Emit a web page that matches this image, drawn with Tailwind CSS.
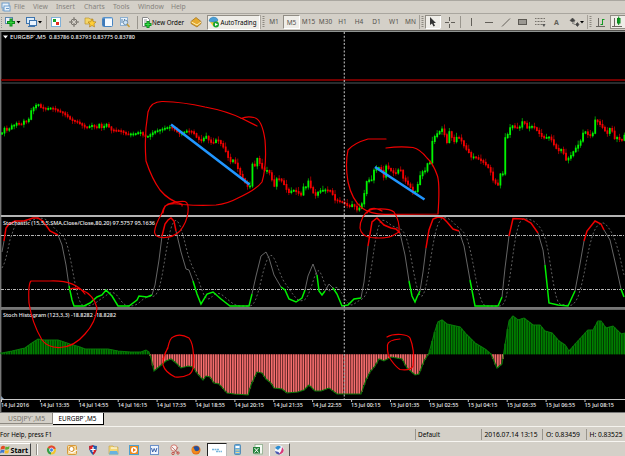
<!DOCTYPE html>
<html lang="en">
<head>
    <meta charset="UTF-8">
    <meta name="viewport" content="width=device-width, initial-scale=1.0">
    <title>EURGBP`,M5</title>
    <script src="https://cdn.jsdelivr.net/npm/@tailwindcss/browser@4"></script>
</head>
<body class="bg-[#d4d0c8] overflow-hidden">
<div class="w-[625px] h-[456px] flex flex-col bg-[#d4d0c8] font-['Noto_Sans',sans-serif] text-[7px] leading-none text-black overflow-hidden whitespace-nowrap">

    <!-- Menu -->
    <div class="h-[13px] shrink-0 flex items-center border-t border-[#aaa7a0] text-[6.8px] text-[#85827c]">
        <svg class="w-[10px] h-[10px] ml-px mr-[3px] shrink-0" viewBox="0 0 10 10"><rect x="1" y="1" width="7" height="5" fill="#e8f2fb" stroke="#6c9ccb"/><rect x="3" y="4" width="6" height="5" fill="#e8f2fb" stroke="#6c9ccb"/><path d="M1 8h2M5 6.500h3" stroke="#6c9ccb"/></svg>
        <span class="w-[19px]">File</span>
        <span class="w-[23px]">View</span>
        <span class="w-7">Insert</span>
        <span class="w-[29px]">Charts</span>
        <span class="w-[25px]">Tools</span>
        <span class="w-[33px]">Window</span>
        <span>Help</span>
    </div>

    <!-- Toolbar -->
    <div class="h-[17px] shrink-0 flex items-center border-t border-[#a9a69f] text-[#55524d]">
        <svg class="w-[46px] h-4 shrink-0" viewBox="0 14 46 16">
            <path d="M1.500 17v11" stroke="#999" stroke-dasharray="1 1"/>
            <rect x="5.500" y="17.500" width="7" height="6" fill="#eef" stroke="#5a86ae"/><path d="M11 18.500v8M7 22.500h8" stroke="#0a8a18" stroke-width="3"/><path d="M11 19.500v6M8 22.500h6" stroke="#36d43c"/>
            <path d="M16.500 21h4l-2 2.500zM38 21h4l-2 2.500z" fill="#000"/>
            <rect x="26.500" y="17.500" width="8" height="6" fill="#dcecfa" stroke="#3d74ad"/><rect x="29.500" y="20.500" width="7" height="5" fill="#eaf4ff" stroke="#3d74ad"/><path d="M28 26.500h7" stroke="#3d74ad"/>
        </svg>
        <svg class="w-[92px] h-4 shrink-0" viewBox="46 14 92 16">
            <path d="M46.500 16v13M137.500 16v13" stroke="#99958d"/>
            <rect x="51.500" y="17.500" width="9" height="9" fill="#fff" stroke="#7fb0d8"/><rect x="53" y="19" width="3" height="3" fill="#19a12a"/><rect x="56" y="22" width="3" height="3" fill="#e32b1c"/>
            <circle cx="74" cy="22" r="3" fill="none" stroke="#77736c"/><path d="M74 17v4M74 23v4M69 22h4M75 22h4" stroke="#77736c"/>
            <path d="M85 18h4l1 1h3v5h-8z" fill="#f4d568" stroke="#b28a22" stroke-width=".6"/><path d="M92 19l1.200 2.600 2.800.3-2 2 .5 3-2.500-1.400L89.500 27l.5-3-2-2 2.800-.3z" fill="#ffcf37" stroke="#aa7512" stroke-width=".6"/>
            <rect x="102.500" y="17.500" width="10" height="9" rx="1" fill="#f5faff" stroke="#4784c1"/><path d="M104 18v8" stroke="#3e79b8" stroke-width="2"/><path d="M103 18h9" stroke="#6da3d6"/>
            <rect x="120.500" y="17.500" width="7" height="8" fill="#e5f0fa" stroke="#8db0d0"/><path d="M122 19v4M124.500 19v3" stroke="#5b86b0"/><circle cx="125.500" cy="22.500" r="2.200" fill="#cce5f9" stroke="#728fa9"/><path d="M127 24l2.500 3" stroke="#c79c36" stroke-width="1.400"/>
        </svg>
        <div class="w-[49px] ml-[3px] flex items-center text-black shrink-0">
            <svg class="w-[11px] h-[13px] shrink-0" viewBox="0 0 11 13"><path d="M1.500 1.500h5l2 2v7h-7z" fill="#fff" stroke="#888"/><path d="M3 4h3M3 6h3" stroke="#999"/><path d="M7 5v7M3.500 8.500h7" stroke="#0c9321" stroke-width="3"/><path d="M7 6v5M4.500 8.500h5" stroke="#3bdf46"/></svg>
            <svg class="w-[33px] h-3 overflow-visible" viewBox="0 0 33 12"><text x="0" y="8.500" font-size="7.300" textLength="32" lengthAdjust="spacingAndGlyphs">New Order</text></svg>
        </div>
        <svg class="w-[17px] h-[13px] shrink-0" viewBox="0 0 17 13"><path d="M1 5.500L6 1.500l5 4v2l-4 3.500-6-3.500z" fill="#e5a92d" stroke="#9b6a13" stroke-width=".7"/><path d="M1.500 6l5.500 3L11 6" stroke="#fff0b0" fill="none"/></svg>
        <div class="w-[53px] h-[15px] flex items-center bg-[#efede8] border border-[#918d85] border-b-white border-r-white text-black shrink-0">
            <svg class="w-[12px] h-3 shrink-0" viewBox="0 0 12 12"><path d="M2 6l3 4 4-1 1-4z" fill="#f1cb38"/><path d="M1 5q0-3 4-4 4 0 5 3 0 2-5 2-3 0-4-1z" fill="#4b9ed4" stroke="#277bb2" stroke-width=".5"/><circle cx="8" cy="8.500" r="3" fill="#19a52d"/><path d="M7 7l3 1.500L7 10z" fill="#fff"/></svg>
            <svg class="w-[38px] h-3 shrink-0 overflow-visible" viewBox="0 0 38 12"><text x="0.500" y="8.500" font-size="7.300" textLength="36" lengthAdjust="spacingAndGlyphs">AutoTrading</text></svg>
        </div>
        <svg class="w-[9px] h-4 shrink-0" viewBox="0 0 9 16"><path d="M3.500 2v12" stroke="#8d8981" stroke-width="2" stroke-dasharray="1 1"/><path d="M.5 1v14" stroke="#aaa69e"/></svg>
        <div class="flex items-center text-center text-[6.500px] shrink-0">
            <span class="w-[10px]">M1</span>
            <span class="w-[17px] h-[14px] ml-[4px] leading-[13px] bg-[#efede8] border border-[#918d85] border-r-white border-b-white">M5</span>
            <span class="w-[17px]">M15</span>
            <span class="w-[17px]">M30</span>
            <span class="w-[17px]">H1</span>
            <span class="w-4">H4</span>
            <span class="w-[19px]">D1</span>
            <span class="w-4">W1</span>
            <span class="w-[17px]">MN</span>
        </div>
        <svg class="w-[206px] h-4 shrink-0" viewBox="419 14 206 16">
            <path d="M419.500 15v14M587.500 15v14" stroke="#a5a199"/><path d="M422.500 16v12M590.500 16v12" stroke="#8d8981" stroke-width="2" stroke-dasharray="1 1"/>
            <rect x="425.500" y="15.500" width="15" height="13" fill="#efede8" stroke="#918d85"/><path d="M440.500 16v12.500h-15" stroke="#fff" fill="none"/>
            <path d="M430 17v8l2-1.500 1.500 3 1.500-.8-1.400-2.700h2.400z" fill="#333"/>
            <path d="M449.500 17v4M449.500 24v4M445 22.500h4M451 22.500h4" stroke="#625f59"/>
            <path d="M460.500 16v12" stroke="#99958d"/>
            <path d="M471.500 18v8M485 22.500h8M502 26.500l8-8" stroke="#625f59"/>
            <rect x="518.500" y="19.500" width="8" height="5" fill="#9b9892" stroke="#5c5953"/>
            <path d="M535 18.500h10M535 21.500h10M535 24.500h7" stroke="#77736c" stroke-dasharray="1 .5"/><path d="M542 24h3.500l-1.500 3z" fill="#555"/>
            <text x="554" y="25" font-size="7" font-weight="bold" fill="#625f59" textLength="5">A</text>
            <path d="M570 20.500l2.500-2.500 2.500 2.500-2.500 1.500zM573.500 22.500l1.500-1M575.500 24.500l2-2 1.500 2-1.500 2zM572 23l3 1.500" fill="#444" stroke="#444" stroke-width=".6"/><path d="M580 21h4l-2 2.500z" fill="#000"/>
            <path d="M598.500 18v9M596 26.500h9" stroke="#696660"/><path d="M602.500 19v6M600.500 24.500h2M602.500 19.500h2" stroke="#139a25"/>
            <rect x="610.500" y="15.500" width="16" height="13" fill="#efede8" stroke="#918d85"/><path d="M614.500 18v9M612 26.500h10" stroke="#696660"/><rect x="617.500" y="18.500" width="2.500" height="4.500" fill="#21c831" stroke="#08871a"/><path d="M618.700 16.500v8.500" stroke="#08871a"/>
        </svg>
    </div>

    <!-- Chart window -->
    <svg class="w-[625px] h-[383px] shrink-0 block" viewBox="0 30 625 383" font-family="Noto Sans, sans-serif">
        <rect x="0" y="30" width="625" height="383" fill="#000"/>
        <path d="M0 30.500h625" stroke="#55534f"/>
        <path d="M0 31.500h625" stroke="#8f9391"/>
        <path d="M.7 32v380" stroke="#777" stroke-width="1.400"/>
        <path d="M1 80h624" stroke="#720000" stroke-width="1.800"/>
        <path d="M1 83h624" stroke="#353b3e" stroke-width="1.600"/>
        <g id="candles"></g>
        <g id="histogram"></g>
        <path d="M1 235.500h624M1 289.500h624" stroke="#b5b5b5" stroke-dasharray="3 1 1 1"/>
        <g id="stochastic" fill="none"></g>
        <path d="M1 216h624" stroke="#b4b4b4" stroke-width="2"/>
        <path d="M1 308h624" stroke="#777" stroke-width="2"/><path d="M1 309.500h624" stroke="#aaa" stroke-width=".6"/>
        <path d="M344.300 32v367" stroke="#aaa" stroke-width="1.200" stroke-dasharray="2 1.700"/>
        <path d="M1 399.500h624" stroke="#c8c8c8"/>
        <path d="M1 396v3h3z" fill="#8aa0b8"/>
        <g id="times" fill="#f0f0f0" font-size="5.800" font-weight="500"></g>

        <path d="M3 35.500h5l-2.500 3z" fill="#fff"/>
        <g fill="#f4f4f4" font-size="5.900" font-weight="500">
            <text x="10" y="39" textLength="36" lengthAdjust="spacingAndGlyphs">EURGBP`,M5</text>
            <text x="49" y="39" textLength="86" lengthAdjust="spacingAndGlyphs">0.83786 0.83793 0.83775 0.83780</text>
            <text x="3" y="224.500" textLength="152" lengthAdjust="spacingAndGlyphs">Stochastic (15,5,5,SMA,Close/Close,80,20) 97.5757 95.1636</text>
            <text x="3" y="316.500" textLength="113" lengthAdjust="spacingAndGlyphs">Stoch Histogram (123,3,3) -18.8282 -18.8282</text>
        </g>

        <!-- Divergence lines -->
        <path d="M171 124.500L249.500 184.500M375 167L424.500 199.500" stroke="#2196ff" stroke-width="2.600"/>

        <!-- Marker notes -->
        <g fill="none" stroke="#f00000" stroke-width="1.200" stroke-linecap="round">
            <path d="M257 126L243 119Q227 111 205 107Q183 102 163 101.500Q151 101 148 112Q144 135 146 161Q152 179 160 190Q169 201 183 204.500Q200 206 216 205Q227 204 238 198Q256 190 262 182Q267 165 265 140Q262 119 254 117.500Q247 116 241 118.500"/>
            <path d="M182 206Q183 204 178 204Q170 203 165 206Q163 209 162 213Q155 225 154.500 232Q155 237 162 237.500Q173 238 180 231Q187 222 188 212Q189 203 185 201.500Q176 201 168 204Q164 206 163 213"/>
            <path d="M386 139L368 139Q354 143 348 150Q345 164 348 182Q352 200 362 208Q370 214 385 214.300L438 214Q440 185 437.500 176Q433 163 427 158Q420 149 413 147.500Q400 146 386 148"/>
            <path d="M382 211Q376 207 370 209Q360 217 360 228Q361 236 371 237.500Q385 239 392 236L399 232Q400 221 394 212Q389 208 376 209Q369 209 367 213"/>
            <path d="M85 294Q75 280 50 281L31 281Q28 284 29 303Q32 323 42 340Q48 348 60 347.500Q74 347 85 334Q96 322 97 308Q94 295 82 290Q76 287 70 289"/>
            <path d="M163 359Q165 354 168 347Q170 338 173 337Q180 333 189 338Q193 343 193.500 355Q195 371 189 374.500Q182 378 175 377Q165 372 163 365Q163 355 168 348"/>
            <path d="M400 339Q388 340 387.500 345Q387 355 391 360Q396 367 400 369.500Q411 371 413 366Q415 350 410 338Q408 335 401 334.500Q392 334 387 337"/>
        </g>
        <path d="M0 412.500h625" stroke="#777"/>
    </svg>

    <!-- Chart tabs -->
    <div class="h-[13px] shrink-0 flex items-start text-[#77736c]">
        <div class="w-[53px] h-[11px] border-b border-r border-[#8d8981] flex items-center">
            <svg class="w-[52px] h-[10px]" viewBox="0 0 52 10"><text x="8" y="7.700" font-size="7" fill="#77736c" textLength="37" lengthAdjust="spacingAndGlyphs">USDJPY`,M5</text></svg>
        </div>
        <div class="w-[51px] h-[12px] bg-white border-b border-r border-black">
            <svg class="w-[50px] h-[11px]" viewBox="0 0 50 11"><text x="5.500" y="7.700" font-size="7" fill="#000" textLength="38" lengthAdjust="spacingAndGlyphs">EURGBP`,M5</text></svg>
        </div>
    </div>

    <!-- Status bar -->
    <div class="h-[15px] shrink-0 flex items-center border-t border-[#f5f3ee] text-[7px] text-[#111]">
        <svg class="w-[415px] h-[13px]" viewBox="0 0 415 13"><text x="0" y="9" font-size="7" textLength="52" lengthAdjust="spacingAndGlyphs">For Help, press F1</text></svg>
        <div class="w-[66px] h-[11px] border-l border-[#99958d]"><svg class="w-[65px] h-[11px]" viewBox="0 0 65 11"><text x="2" y="8" font-size="7" textLength="22" lengthAdjust="spacingAndGlyphs">Default</text></svg></div>
        <div class="w-[61px] h-[11px] border-l border-[#99958d]"><svg class="w-[60px] h-[11px]" viewBox="0 0 60 11"><text x="2.500" y="8" font-size="7" textLength="53" lengthAdjust="spacingAndGlyphs">2016.07.14 13:15</text></svg></div>
        <div class="w-[44px] h-[11px] border-l border-[#99958d]"><svg class="w-[43px] h-[11px]" viewBox="0 0 43 11"><text x="3" y="8" font-size="7" textLength="34" lengthAdjust="spacingAndGlyphs">O: 0.83459</text></svg></div>
        <div class="w-[39px] h-[11px] border-l border-[#99958d]"><svg class="w-[38px] h-[11px]" viewBox="0 0 38 11"><text x="2.500" y="8" font-size="7" textLength="33" lengthAdjust="spacingAndGlyphs">H: 0.83525</text></svg></div>
    </div>

    <!-- Taskbar -->
    <div class="h-[16px] shrink-0 flex items-center border-t border-[#f8f6f2]">
        <div class="w-[31px] h-[13px] flex items-center border-r border-b border-[#444] border-t border-t-white">
            <svg class="w-[30px] h-[11px]" viewBox="0 0 30 11"><path d="M1 3q2-2 4-.5L4.500 5.500Q2.500 4.500.5 6z" fill="#e54a22"/><path d="M5.500 2.500q2 1 4-.5L9 5q-2 1-4 .5z" fill="#60ac32"/><path d="M.5 6.500q2-1.500 4-.3L4 9Q2 8 0 9.500z" fill="#3976d1"/><path d="M5 6.300q2 .7 4-.3l-.6 3Q6 10 4.500 9z" fill="#f4ba24"/><text x="10.500" y="8.500" font-size="7.500" font-weight="bold" textLength="17.500" lengthAdjust="spacingAndGlyphs">Start</text></svg>
        </div>
        <svg class="w-[176px] h-[14px] shrink-0" viewBox="31 442 176 14">
            <path d="M36.500 443v11" stroke="#918d85"/><path d="M37.500 443v11" stroke="#fff"/>
            <circle cx="51.500" cy="449" r="4.500" fill="#f1c62d"/><path d="M51.500 449L47.600 446.700A4.500 4.500 0 0 1 55.800 447.500z" fill="#df4436"/><path d="M51.500 449l-3.900-2.300a4.500 4.500 0 0 0 3.200 6.700z" fill="#2e9e4d"/><circle cx="51.500" cy="449" r="2" fill="#4284e5" stroke="#fff" stroke-width=".7"/>
            <rect x="67.500" y="444.500" width="9" height="9" rx="1" fill="#f8dda0" stroke="#d89a38"/><circle cx="71.500" cy="448" r="2.500" fill="#fff" stroke="#d28723"/><path d="M69 450l3 2 5-3" stroke="#fff" fill="none"/>
            <path d="M89 445q2.500 0 4-1 2 1 4 1 0 6-4 9-4-3-4-9z" fill="#245cab"/><path d="M89 445q2.500 0 4-1v5h-3.500z" fill="#d82027"/><path d="M93 449h3.500q-1 3-3.500 5z" fill="#d82027"/><path d="M93 446v5M90.500 448.500h5" stroke="#fff" stroke-width="1.200"/>
            <path d="M109 445h4l1 1h4v7h-9z" fill="#f2d675" stroke="#c59f3d" stroke-width=".6"/><path d="M110 450h7l1.500 3.500H109z" fill="#67b3df"/><path d="M111 447h6" stroke="#fff"/>
            <rect x="129.500" y="444.500" width="9" height="9" fill="#ef8b20" stroke="#4c9fd0"/><circle cx="134" cy="449" r="3" fill="#fff"/><path d="M133 447v4l3-2z" fill="#ed7b17"/>
            <rect x="150.500" y="444.500" width="8" height="9" fill="#eef4fd" stroke="#6c91c9"/><path d="M151.500 447l1.200 4 1.500-3.500 1.500 3.500 1.200-4" stroke="#2d57a4" stroke-width=".9" fill="none"/>
            <circle cx="174" cy="447" r="3.200" fill="#f8efed" stroke="#d37b70"/><path d="M172 446l6 6M178 446l-4 6" stroke="#b0655e" stroke-width=".8"/><circle cx="173" cy="452.500" r="1.200" fill="none" stroke="#c4342b" stroke-width=".8"/><circle cx="178" cy="452" r="1.200" fill="none" stroke="#c4342b" stroke-width=".8"/>
            <circle cx="196" cy="449" r="4.500" fill="#e56f15"/><circle cx="196.300" cy="448" r="3" fill="#264f9b"/><path d="M192 446q-1 5 3 6.500 4 0 5-4-3 3-5 1l-1-2z" fill="#f18b1d"/>
        </svg>
        <div class="w-[20px] h-[14px] bg-white border border-[#222] border-r-[#bbb] border-b-[#bbb] shrink-0"><svg class="w-[18px] h-3" viewBox="0 0 18 12"><path d="M4 5.500h7M8 7.500h6" stroke="#79b6dc" stroke-width="1.300" stroke-dasharray="2 .5"/></svg></div>
        <svg class="w-[41px] h-[14px] shrink-0" viewBox="227 442 41 14">
            <rect x="234.500" y="443.500" width="6" height="10" rx="1" fill="#6aaede" stroke="#4582b1" stroke-width=".8"/><rect x="235.500" y="445" width="4" height="2" fill="#fff"/><path d="M235.500 449h4M235.500 451.500h4" stroke="#f3d888"/>
            <rect x="255" y="443.500" width="7.500" height="9.500" fill="#f4fbf3" stroke="#8dad8b" stroke-width=".8"/><rect x="253" y="446" width="7" height="6.500" fill="#24823b"/><path d="M254.500 447l4 4.500M258.500 447l-4 4.500" stroke="#fff"/>
        </svg>
        <div class="w-[21px] h-[14px] ml-px border border-t-white border-l-white border-r-[#555] border-b-[#555] shrink-0"><svg class="w-[19px] h-3" viewBox="0 0 19 12"><circle cx="9.500" cy="6" r="4.500" fill="#f2f7fd"/><path d="M5 4q3-4 6-1l-3 3z" fill="#2e8cd0"/><path d="M12 3q4 4-1 7l-3 .5q4-3 4-7.500z" fill="#d83b78"/><path d="M5 7q1 4 5 3.500L8.500 8z" fill="#4958b0"/></svg></div>
    </div>
</div>

<script>
    const NS = 'http://www.w3.org/2000/svg';
    const STEP = 2.431;

    function add(parent, tag, attrs) {
        const el = document.createElementNS(NS, tag);
        for (const key in attrs) el.setAttribute(key, attrs[key]);
        document.getElementById(parent).appendChild(el);
        return el;
    }

    function parse(str) {
        return str.trim().split(/\s+/).map(p => p.split(',').map(Number));
    }

    // Linear value of a series at x
    function valueAt(points, x) {
        for (let i = 1; i < points.length; i++) {
            if (x <= points[i][0]) {
                const [x0, y0] = points[i - 1], [x1, y1] = points[i];
                return y0 + (y1 - y0) * (x - x0) / (x1 - x0);
            }
        }
        return points[points.length - 1][1];
    }

    const price = parse(`0,134 2,133 4,128 8,131 11,126 15,125 18,122 20,126 24,121 28,122 31,111 35,106 38,104 40,107 45,109 52,108 58,111 63,113 68,117 71,120 77,122 82,125 86,128 93,125 96,129 99,124 102,128 107,124 111,130 121,131 126,134 135,134 140,132 144,136 147,137 154,132 160,130 166,128 171,127 176,131 180,134 187,131 193,132 197,138 201,141 206,136
        210,142 213,143 217,139 222,145 225,150 230,162 233,160 236,164 240,174 244,181 248,187 250,186 252,164 255,166 257,158 262,168 266,172 268,169 271,177 274,187 277,178 281,180 285,186 288,193 293,190 297,192 301,195 303,187 307,187 309,178 311,189 315,196 319,191 325,190 331,191 335,200 344,203 349,207 353,204 357,210 361,207 364,195 366,182 369,180 371,182 374,170 380,167 384,178 386,166 390,170 395,174 400,168 403,178 407,183 411,188 414,194
        417,188 419,178 422,172 425,171 428,162 430,163 432,142 435,136 438,133 442,129 445,136 447,143 449,131 452,138 455,143 457,136 461,140 465,148 468,151 471,157 475,157 480,160 483,162 487,166 490,170 493,180 497,185 499,185 500,174 503,174 505,138 508,134 511,125 516,128 520,127 523,120 527,128 531,126 535,128 538,132 543,138 550,137 554,145 558,151 562,149 566,160 570,157 575,149 580,143 584,130 587,134 590,136 593,133 595,120 598,122 603,128 607,134 611,126 614,139 618,137 621,142 625,134`);

    let prev = 134;
    for (let i = 0; i < 257; i++) {
        const x = 2 + i * STEP;
        const close = valueAt(price, x);
        const color = close <= prev ? '#00f400' : '#f40000';
        const wick = 1 + (i * 7 % 5) * (x > 200 ? .9 : .45);
        const top = Math.min(prev, close), low = Math.max(prev, close);
        add('candles', 'rect', { x: x - .4, y: top - wick, width: .8, height: low - top + wick + 1 + (i * 3 % 4) * .8, fill: color, opacity: .75 });
        add('candles', 'rect', { x: x - .85, y: top - .5, width: 1.8, height: Math.max(1.8, low - top + 1), fill: color });
        prev = close;
    }

    // Stochastic main line: h = above 80, n = between levels, l = below 20
    const stochastic = [
        ['n', '2,252 4,241'],
        ['h', '4,241 6,228 9,224 15,221 24,221 33,218 38,218 43,221 50,231 58,235'],
        ['n', '58,235 62,245 66,265 69,286'],
        ['l', '69,286 72,300 74,306 84,306 90,303 97,297 102,295 106,290 112,296 118,306 129,306 137,300 139,296 147,297 152,295'],
        ['n', '152,295 155,285 159,260 162,236'],
        ['h', '162,236 165,224 168,220 171,218 174,221 176,231'],
        ['n', '176,231 181,252 186,269 189,270 193,281'],
        ['l', '193,281 197,294 201,304 207,294 213,292 221,299 230,306 249,306 252,294'],
        ['n', '252,294 256,276 261,256 266,252 269,258 274,275 281,287'],
        ['l', '281,287 285,290 289,299 296,302 302,298 305,290'],
        ['n', '305,290 308,276 313,264 317,275'],
        ['l', '317,275 319,291 322,295 325,291'],
        ['n', '325,291 329,284 333,288'],
        ['l', '333,288 337,294 342,306 348,305 354,299 361,298'],
        ['n', '361,298 364,282 368,246'],
        ['h', '368,246 372,222 377,218 384,225 391,228 396,229 400,233'],
        ['n', '400,233 405,255 409,281'],
        ['l', '409,281 412,296 415,302 417,297 420,291'],
        ['n', '420,291 423,272 426,248'],
        ['h', '426,248 429,230 433,219 438,217 443,218 447,222 453,229 459,231'],
        ['n', '459,231 464,246 470,280'],
        ['l', '470,280 475,306 498,306 502,297'],
        ['n', '502,297 505,268 509,236'],
        ['h', '509,236 513,218.500 524,219 531,223 538,233'],
        ['n', '538,233 543,250 545,265'],
        ['l', '545,265 549,303 558,305 568,306 575,291'],
        ['n', '575,291 580,264 584,241'],
        ['h', '584,241 587,231 595,221 601,224 604,230'],
        ['n', '604,230 610,240 616,266 621,289'],
        ['l', '621,289 624,297']
    ];
    const main = stochastic.flatMap(s => parse(s[1]));

    // Signal line: the main line averaged over the last bars
    const signal = [];
    for (let x = 2; x < 626; x += 2) {
        let sum = 0;
        for (const back of [2, 4, 6, 8, 10]) sum += valueAt(main, Math.max(2, x - back));
        signal.push(x + ',' + (sum / 5 + (x < 10 ? (10 - x) * 2 : 0)));
    }
    add('stochastic', 'polyline', { points: signal.join(' '), stroke: '#777', 'stroke-width': .8, 'stroke-dasharray': '2 2' });
    for (const [level, points] of stochastic) {
        const color = { h: '#f00000', n: '#707070', l: '#00f000' }[level];
        add('stochastic', 'polyline', { points: points, stroke: color, 'stroke-width': level === 'n' ? .9 : 1.5 });
    }

    // Histogram around the zero line
    const ZERO = 354.3;
    const hist = parse(`0,353 2,353 12,351 25,348 32,343 38,339 44,340 58,340 70,344 80,347 85,349 108,349 118,351 130,352 141,352 146,350 149,352 151,358 154,371 160,366 166,361 171,359 176,363 181,368 188,366 193,367 197,373 203,380 206,376 210,377 214,383 219,384 227,393 234,394 248,395 251,385 257,372 262,373 266,379 271,383 274,388 282,389 287,393 298,392 304,390 309,385 315,391 321,391 329,388 337,394 361,394 366,380 370,372 375,366 379,359 384,361 391,357 402,359 407,368
        415,375 419,374 424,361 429,353 435,331 438,322 442,320 447,324 460,327 467,335 475,343 485,349 491,354 497,368 502,364 505,345 509,321 513,316 518,320 524,318 533,325 540,325 545,331 552,333 559,341 565,345 569,351 577,342 588,330 593,330 598,321 601,321 606,328 613,326 621,334 625,333`);
    for (let i = 0; i < 257; i++) {
        const x = 2 + i * STEP;
        const y = valueAt(hist, x);
        const up = y < ZERO;
        add('histogram', 'rect', { x: x - 1.22, y: Math.min(y, ZERO), width: STEP, height: Math.abs(y - ZERO), fill: up ? '#003c00' : '#5a2020' });
        add('histogram', 'rect', { x: x - .85, y: Math.min(y, ZERO), width: 1.6, height: Math.abs(y - ZERO), fill: up ? '#008000' : '#f56e6e' });
    }
    add('histogram', 'polyline', { points: hist.map(p => p.join(',')).join(' '), fill: 'none', stroke: '#087808', 'stroke-width': 1.1 });

    // Time scale
    const times = ['14 Jul 2016', '14 Jul 13:35', '14 Jul 14:55', '14 Jul 16:15', '14 Jul 17:35', '14 Jul 18:55', '14 Jul 20:15', '14 Jul 21:35', '14 Jul 22:55', '15 Jul 00:15', '15 Jul 01:35', '15 Jul 02:55', '15 Jul 04:15', '15 Jul 05:35', '15 Jul 06:55', '15 Jul 08:15'];
    times.forEach((label, i) => {
        const x = 1 + i * 38.9;
        add('times', 'path', { d: 'M' + (x + .5) + ' 400v2', stroke: '#c8c8c8' });
        add('times', 'text', { x: x, y: 407.300, textLength: i ? 29.5 : 28, lengthAdjust: 'spacingAndGlyphs' }).textContent = label;
    });
</script>
</body>
</html>
